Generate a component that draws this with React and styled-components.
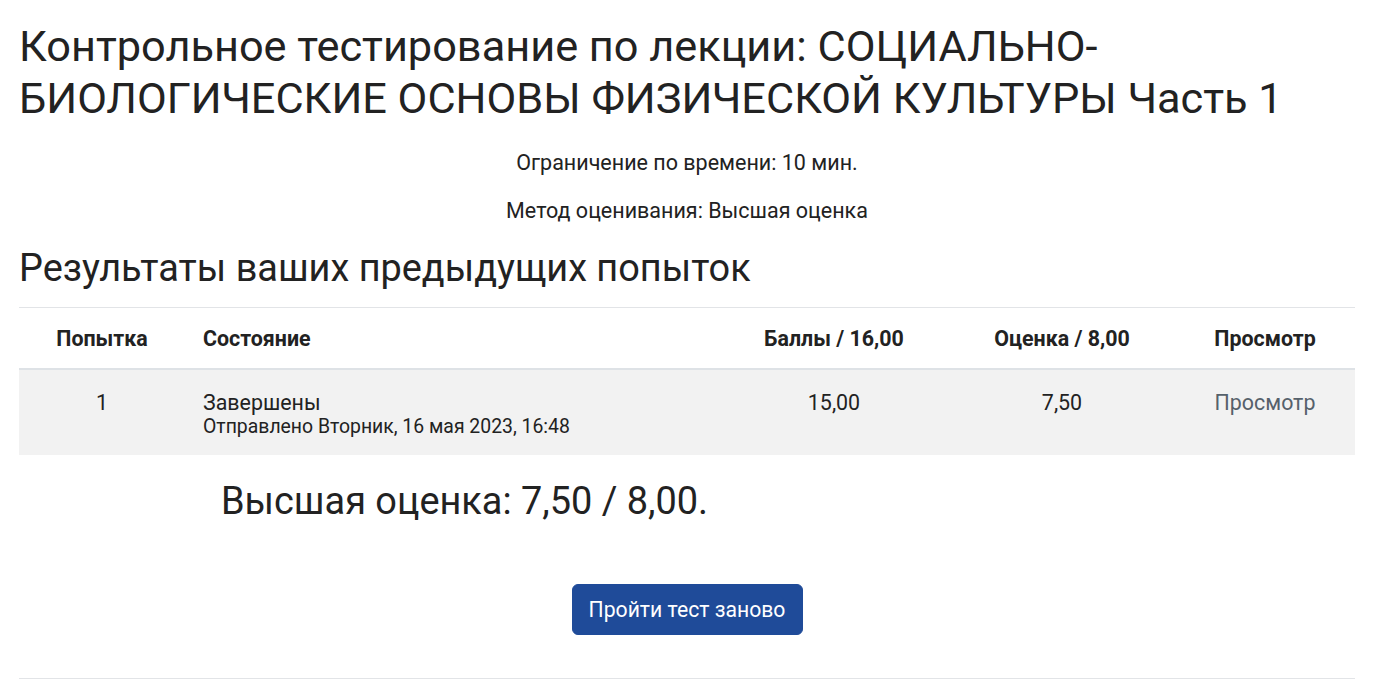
import React from "react";
import styled, { createGlobalStyle } from "styled-components";

const Global = createGlobalStyle`
  html, body { margin: 0; padding: 0; background: #fff; }
  body { font-family: Roboto, "Noto Sans", sans-serif; color: #1d2125; }
`;

const Page = styled.main`
  padding: 21px 18px 0 19px;
`;

const Title = styled.h2`
  margin: 0;
  font-size: 43.3px;
  font-weight: 400;
  line-height: 52px;
  color: #222;
`;

const Info = styled.p`
  margin: ${(p) => p.$mt || 0}px 0 0;
  text-align: center;
  font-size: 21.5px;
  line-height: 26px;
  color: #222;
`;

const Heading = styled.h3`
  margin: 22px 0 0;
  font-size: 37.9px;
  font-weight: 400;
  line-height: 44px;
  color: #222;
  padding-bottom: 17px;
  border-bottom: 1px solid #e2e4e7;
`;

const Table = styled.table`
  width: 100%;
  border-collapse: collapse;
  table-layout: fixed;
`;

const Th = styled.th`
  height: 60px;
  font-size: 21.4px;
  font-weight: 700;
  color: #222;
  text-align: ${(p) => p.$align || "center"};
  padding: 0 0 0 ${(p) => (p.$align === "left" ? "18px" : "0")};
  border-bottom: 2px solid #dee2e6;
  vertical-align: middle;
`;

const Tr = styled.tr`
  background: #f2f2f2;
`;

const Td = styled.td`
  height: 86px;
  box-sizing: border-box;
  padding: 20px 0 16px ${(p) => (p.$align === "left" ? "18px" : "0")};
  font-size: 21.4px;
  line-height: 25px;
  color: #222;
  text-align: ${(p) => p.$align || "center"};
  vertical-align: top;
`;

const Sub = styled.div`
  font-size: 19.4px;
  line-height: 24px;
  color: #222;
`;

const Link = styled.a`
  color: #56616b;
  text-decoration: none;
`;

const Best = styled.h3`
  margin: 24px 0 0;
  padding-left: 202px;
  font-size: 37.9px;
  font-weight: 400;
  line-height: 44px;
  color: #222;
`;

const ButtonRow = styled.div`
  display: flex;
  justify-content: center;
  margin-top: 61px;
  padding-bottom: 43px;
  border-bottom: 1px solid #e2e4e7;
`;

const Button = styled.button`
  font-family: Roboto, "Noto Sans", sans-serif;
  font-size: 21.2px;
  color: #fff;
  background: #1f4b99;
  border: 1px solid #1f4b99;
  border-radius: 6px;
  width: 231px;
  height: 51px;
  padding: 0;
  cursor: pointer;
`;

export default function App() {
  return (
    <>
      <Global />
      <Page>
        <Title>
          Контрольное тестирование по лекции: СОЦИАЛЬНО-БИОЛОГИЧЕСКИЕ ОСНОВЫ ФИЗИЧЕСКОЙ КУЛЬТУРЫ Часть 1
        </Title>
        <Info $mt={25}>Ограничение по времени: 10 мин.</Info>
        <Info $mt={22}>Метод оценивания: Высшая оценка</Info>
        <Heading>Результаты ваших предыдущих попыток</Heading>
        <Table>
          <colgroup>
            <col style={{ width: 166 }} />
            <col style={{ width: 534 }} />
            <col style={{ width: 230 }} />
            <col style={{ width: 226 }} />
            <col style={{ width: 180 }} />
          </colgroup>
          <thead>
            <tr>
              <Th>Попытка</Th>
              <Th $align="left">Состояние</Th>
              <Th>Баллы / 16,00</Th>
              <Th>Оценка / 8,00</Th>
              <Th>Просмотр</Th>
            </tr>
          </thead>
          <tbody>
            <Tr>
              <Td>1</Td>
              <Td $align="left">
                Завершены
                <Sub>Отправлено Вторник, 16 мая 2023, 16:48</Sub>
              </Td>
              <Td>15,00</Td>
              <Td>7,50</Td>
              <Td>
                <Link href="#">Просмотр</Link>
              </Td>
            </Tr>
          </tbody>
        </Table>
        <Best>Высшая оценка: 7,50 / 8,00.</Best>
        <ButtonRow>
          <Button>Пройти тест заново</Button>
        </ButtonRow>
      </Page>
    </>
  );
}
